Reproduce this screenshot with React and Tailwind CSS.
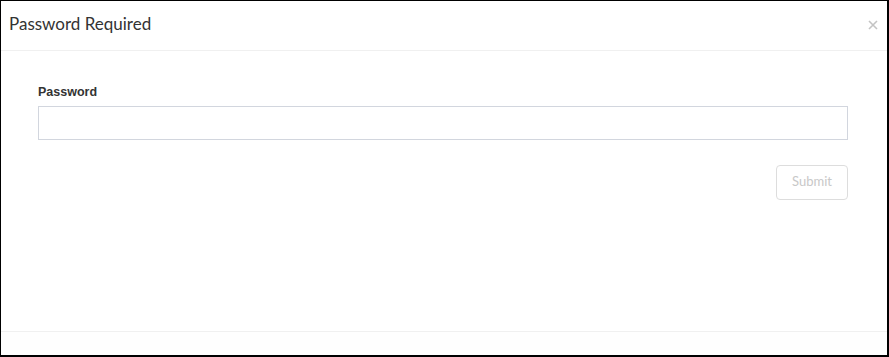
export default function App() {
  return (
    <div className="flex h-[357px] w-[889px] flex-col border-l border-t border-r-2 border-b-2 border-black bg-white font-['Lato',sans-serif]">
      <div className="flex h-[50px] shrink-0 items-center justify-between border-b border-[#f0f0f0] pl-2 pr-[9px]">
        <h4 className="text-[17px] leading-none text-[#333] pb-[5px]">Password Required</h4>
        <button className="mb-[2px] text-[#c4c4c4]" title="Close">
          <svg width="10" height="10" viewBox="0 0 10 10" stroke="currentColor" strokeWidth="1.6">
            <path d="M1 1l8 8M9 1l-8 8" />
          </svg>
        </button>
      </div>
      <div className="flex-1 pl-[37px] pr-[39px] pt-[35px]">
        <label className="block text-[12.5px] font-bold leading-none text-[#333] font-['Liberation_Sans',Arial,sans-serif]">
          Password
        </label>
        <input
          type="password"
          className="mt-[7px] block h-[34px] w-full border border-[#d2d6de] bg-white px-3 text-sm outline-none"
        />
        <div className="mt-[25px] flex justify-end">
          <button
            disabled
            className="h-[35px] w-[72px] rounded-[4px] border border-[#ddd] bg-white text-[13px] text-[#c8c8c8]"
          >
            Submit
          </button>
        </div>
      </div>
      <div className="h-[24px] shrink-0 border-t border-[#f0f0f0] bg-[#fefefe]" />
    </div>
  );
}
